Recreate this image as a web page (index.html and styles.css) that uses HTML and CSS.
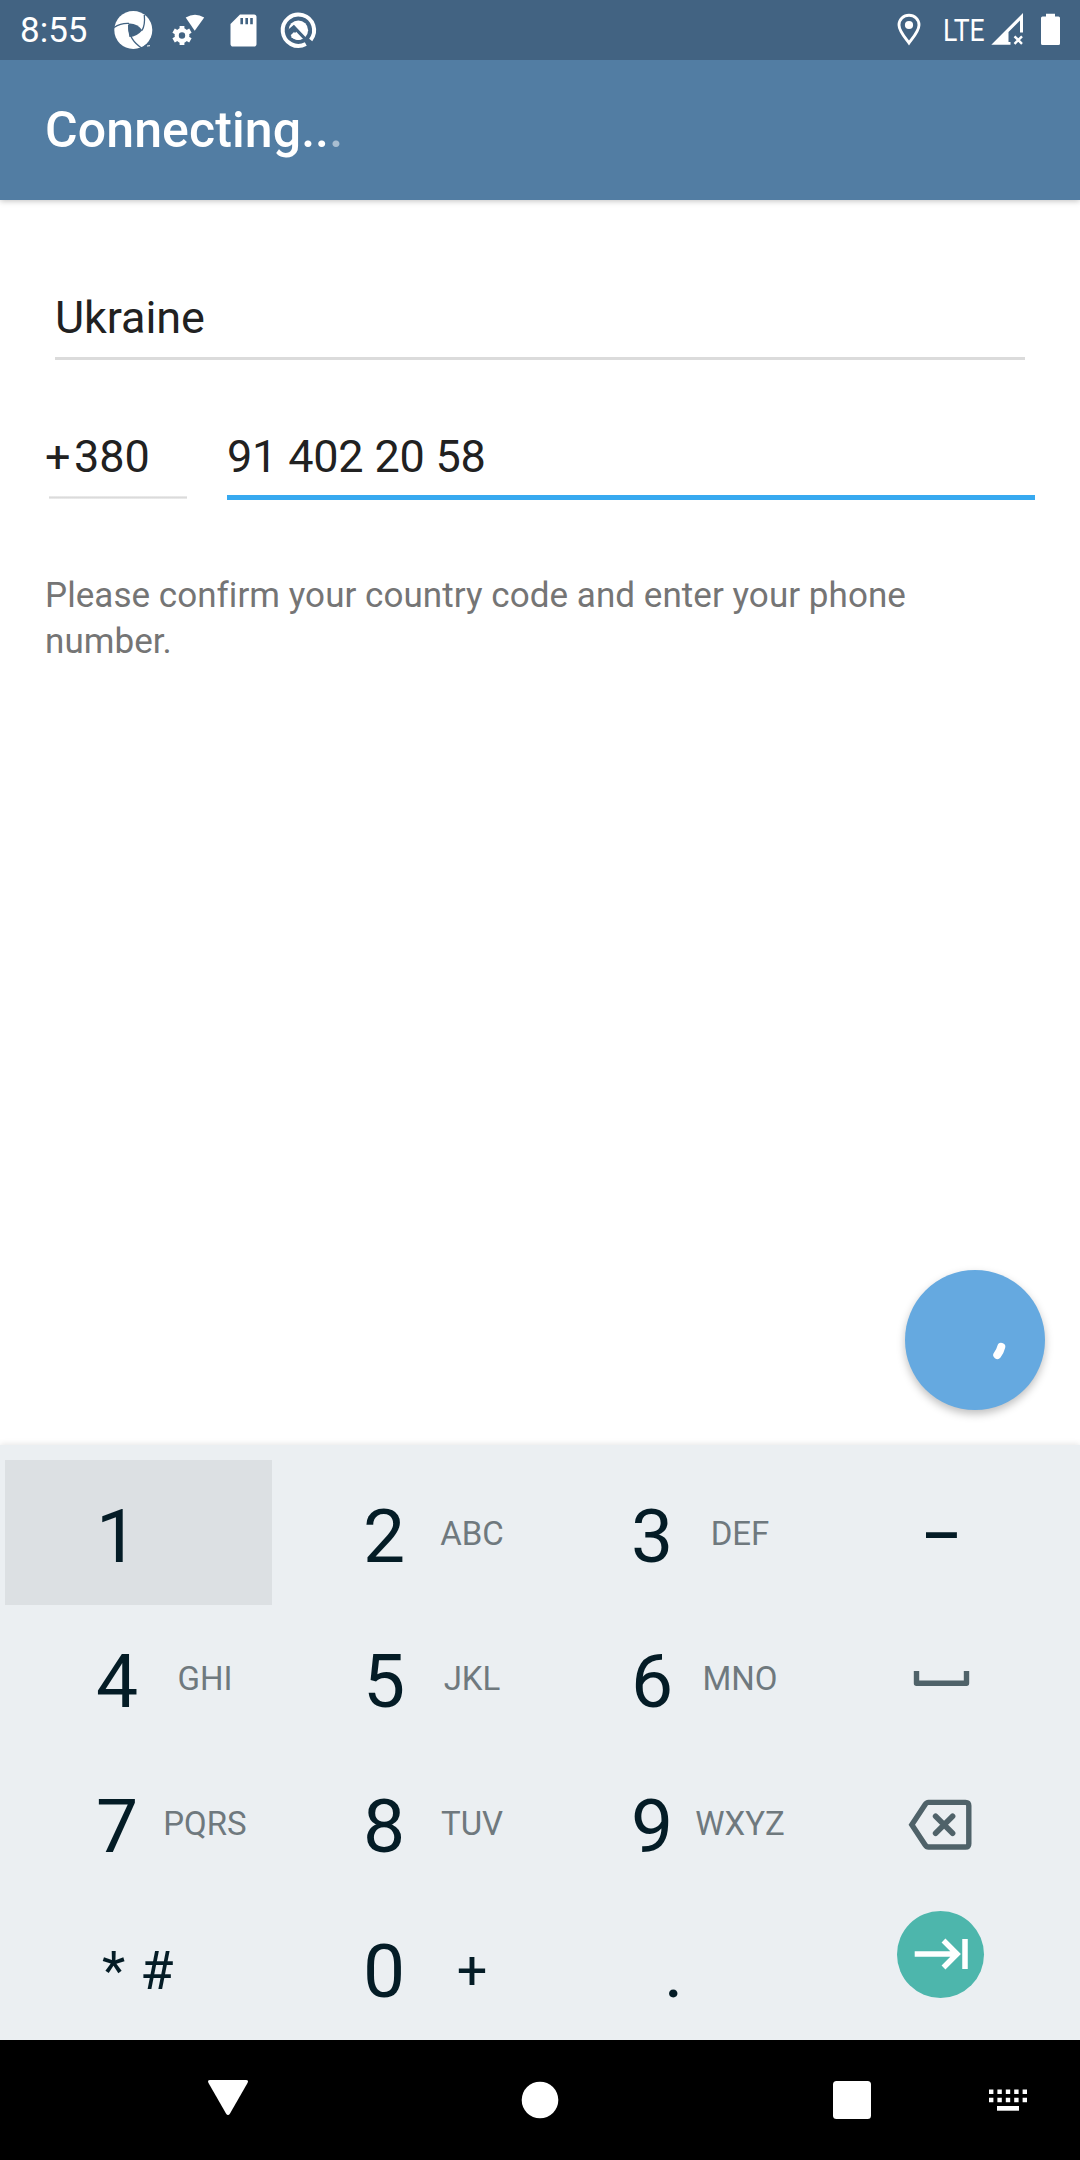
FILE: index.html
```html
<!DOCTYPE html>
<html lang="en">
<head>
<meta charset="utf-8">
<title>Your phone</title>
<link rel="stylesheet" href="styles.css">
</head>
<body>
<div class="screen">
  <div class="status">
    <span class="clock">8:55</span>
    <svg class="notices" width="216" height="60" viewBox="104 0 216 60">
      <circle cx="133.3" cy="30" r="19" fill="#fff"/>
      <path d="M128.6 23.6Q137 23 142.3 30.2Q137 36.5 129.4 37.1Q127.6 30 128.6 23.6Z" fill="#426382"/>
      <path d="M114 27.5Q121 23 129 23.5M144.3 15Q145.3 25 142 30.5M128.6 25Q128.500 40 142.500 48.500" fill="none" stroke="#426382" stroke-width="1.3"/>
      <path d="M143 50L144 45.700H153V50Z" fill="#426382"/>
      <path d="M147 46L150 45.700" stroke="#fff"/>
      <path d="M185.700 17.500Q195 12.200 204.200 17.500L194.700 30.700Z" fill="#fff"/>
      <circle cx="182" cy="35.500" r="5.300" fill="none" stroke="#fff" stroke-width="4.200"/>
      <path d="M182 26V29M182 42V45M173.600 30.600L176.200 32.100M187.800 38.900L190.400 40.400M173.600 40.400L176.200 38.900M187.800 32.100L190.400 30.600" stroke="#fff" stroke-width="4.800"/>
      <path d="M240 14.500H254Q256.500 14.500 256.500 17V43.700Q256.500 46.500 254 46.500H233Q230.500 46.500 230.500 43.700V24Z" fill="#fff"/>
      <path d="M241.700 18V24.300M246.700 18V24.300M251.500 18V24.300" stroke="#426382" stroke-width="2.600"/>
      <path d="M305.800 44.100A15.700 15.700 0 1 1 310.700 40" fill="none" stroke="#fff" stroke-width="4"/>
      <circle cx="298.300" cy="30.300" r="9.800" fill="#fff"/>
      <path d="M287.500 32.300L293.800 27L309 43" fill="none" stroke="#426382" stroke-width="3.200"/>
      <path d="M287 33L293.500 27L297 31L291.500 36.500L289 37.500Z" fill="#426382"/>
      <path d="M290.700 35.300L294 32L301.300 39.500Q295 41.500 290.700 35.300Z" fill="#fff"/>
    </svg>
    <svg class="place" width="26" height="60" viewBox="896 0 26 60">
      <path d="M909 43C905 37.500 899 31 899 25A10 9.800 0 0 1 919 25C919 31 913 37.500 909 43Z" fill="none" stroke="#fff" stroke-width="2.900"/>
      <circle cx="909" cy="25" r="4.100" fill="#fff"/>
    </svg>
    <span class="network">LTE</span>
    <svg class="signal" width="76" height="60" viewBox="988 0 76 60">
      <path d="M991.300 44.800L1023 13V32.500H1020V20.500L1008.500 32V42H1010.500V44.800Z" fill="#fff"/>
      <path d="M1014.500 36.300L1022 43.800M1022 36.300L1014.500 43.800" stroke="#fff" stroke-width="2.400"/>
      <path d="M1042.500 16.500H1046V13.700H1055V16.500H1058.500Q1060 16.500 1060 18V43.500Q1060 45 1058.500 45H1042.500Q1041 45 1041 43.500V18Q1041 16.500 1042.500 16.500Z" fill="#fff"/>
    </svg>
  </div>
  <header class="bar">Connecting..<span class="fade">.</span></header>

  <main class="form">
    <div class="country">Ukraine</div>
    <div class="phone">
      <div class="code"><span class="plus">+</span><span>380</span></div>
      <div class="number">91 402 20 58</div>
    </div>
    <p class="hint">Please confirm your country code and enter your phone number.</p>
    <div class="next">
      <svg width="140" height="140" viewBox="0 0 140 140"><path d="M96.300 76.800Q95.300 81 92.300 85" fill="none" stroke="#fff" stroke-width="8" stroke-linecap="round"/></svg>
    </div>
  </main>

  <section class="keys">
    <div class="key pressed"><b>1</b></div>
    <div class="key"><b>2</b><i>ABC</i></div>
    <div class="key"><b>3</b><i>DEF</i></div>
    <div class="key single"><span class="sym dash">–</span></div>
    <div class="key"><b>4</b><i>GHI</i></div>
    <div class="key"><b>5</b><i>JKL</i></div>
    <div class="key"><b>6</b><i>MNO</i></div>
    <div class="key single"><svg width="88" height="145" viewBox="897 1605 88 145"><path d="M916.500 1671V1683.300H966.500V1671" fill="none" stroke="#4f6269" stroke-width="5.400" stroke-linejoin="round"/></svg></div>
    <div class="key"><b>7</b><i>PQRS</i></div>
    <div class="key"><b>8</b><i>TUV</i></div>
    <div class="key"><b>9</b><i>WXYZ</i></div>
    <div class="key single"><svg width="88" height="145" viewBox="897 1750 88 145"><path d="M928.500 1802.400H965.500Q968.800 1802.400 968.800 1805.700V1843.700Q968.800 1847 965.500 1847H928.500Q926.500 1847 925 1844.700L911.800 1824.700L925 1804.700Q926.500 1802.400 928.500 1802.400Z" fill="none" stroke="#4f6269" stroke-width="5.400"/><path d="M935.600 1816.300L952.600 1833.300M952.600 1816.300L935.600 1833.300" stroke="#4f6269" stroke-width="5.600" stroke-linecap="round"/></svg></div>
    <div class="key single"><span class="sym pair">* #</span></div>
    <div class="key"><b>0</b><i class="sym">+</i></div>
    <div class="key single"><b>.</b></div>
    <div class="key single"><svg width="88" height="145" viewBox="897 1895 88 145"><circle cx="940.500" cy="1954.500" r="43.500" fill="#4db6ac"/><path d="M914.700 1954H956M943.500 1940.500L957 1954L943.500 1967.500M965 1939V1969" fill="none" stroke="#fff" stroke-width="5.500"/></svg></div>
  </section>

  <nav class="nav">
    <svg width="1080" height="120" viewBox="0 2040 1080 120" fill="#fff">
      <path d="M210 2080H246Q249 2080 247.500 2083L230 2113.500Q228 2116.500 226 2113.500L208.500 2083Q207 2080 210 2080Z"/>
      <circle cx="540" cy="2100" r="18.300"/>
      <rect x="833" y="2081" width="38" height="38" rx="3.500"/>
      <path d="M989 2091.700H1027M989 2100H1027" stroke="#fff" stroke-width="4.400" stroke-dasharray="4.400 4"/>
      <rect x="997" y="2106" width="22" height="4.700"/>
    </svg>
  </nav>
</div>
</body>
</html>
```
FILE: styles.css
```css
* { box-sizing: border-box; }
body { margin: 0; font-family: Roboto, "Noto Sans", sans-serif; background: #fff; }
svg { display: block; flex: none; }
.screen { width: 1080px; height: 2160px; display: flex; flex-direction: column; overflow: hidden; }

.status { position: relative; z-index: 1; height: 60px; background: #426382; color: #fff; display: flex; align-items: center; padding: 0 16px 0 20px; }
.clock { width: 84px; font-size: 35px; line-height: 60px; padding-top: 1px; }
.place { margin-left: auto; }
.network { width: 66px; padding-left: 21px; font-size: 32px; font-weight: 400; line-height: 58px; white-space: nowrap; transform: scaleX(.83); transform-origin: 21px 50%; }

.bar { position: relative; height: 140px; padding: 0 45px; background: #527da3; color: #fff; font-size: 50px; font-weight: 500; line-height: 140px; letter-spacing: .1px; box-shadow: 0 1px 6px rgba(0, 0, 0, .25); }
.fade { opacity: .5; }

.form { height: 1245px; display: flex; flex-direction: column; color: #212121; font-size: 45px; }
.country { height: 90px; margin: 70px 55px 0; line-height: 96px; letter-spacing: -.1px; border-bottom: 3px solid #dbdbdb; }
.phone { display: flex; gap: 40px; height: 90px; margin: 50px 45px 0; line-height: 94px; }
.code { display: flex; width: 142px; height: 90px; background: linear-gradient(#efefef, #dbdbdb, #efefef) 4px 86px / 138px 3px no-repeat; }
.plus { width: 29px; }
.number { flex: 1; height: 90px; letter-spacing: -.2px; border-bottom: 5px solid #37a9f0; }
.hint { width: 900px; margin: 73px 0 0 45px; font-size: 35px; line-height: 46px; letter-spacing: .05px; color: #757575; }
.next { width: 140px; height: 140px; margin: auto 35px 35px auto; border-radius: 50%; background: #65a9e0; box-shadow: 0 4px 9px rgba(0, 0, 0, .25); }

.keys { position: relative; height: 595px; padding: 15px 5px 0; display: grid; grid-template-columns: 267px 268px 267.5px 267.5px; grid-auto-rows: 145px; background: #ebeff2; color: #041c26; box-shadow: 0 -1px 6px rgba(0, 0, 0, .1); }
.key { display: flex; align-items: flex-start; padding-left: 82px; }
.key b { width: 60px; text-align: center; font-size: 75px; font-weight: 400; line-height: 152px; }
.key i { width: 116px; text-align: center; font-style: normal; font-size: 33px; line-height: 147px; color: #6f797e; }
.key.single { padding: 0; justify-content: center; }
.key.pressed { background: #dce0e3; }
.key .sym { font-size: 54px; line-height: 151px; color: #041c26; white-space: pre; }
.key .dash { font-size: 62px; font-weight: 500; line-height: 151px; }
.key .pair { letter-spacing: .5px; word-spacing: .8px; margin-right: 1px; }

.nav { height: 120px; background: #000; }
```
